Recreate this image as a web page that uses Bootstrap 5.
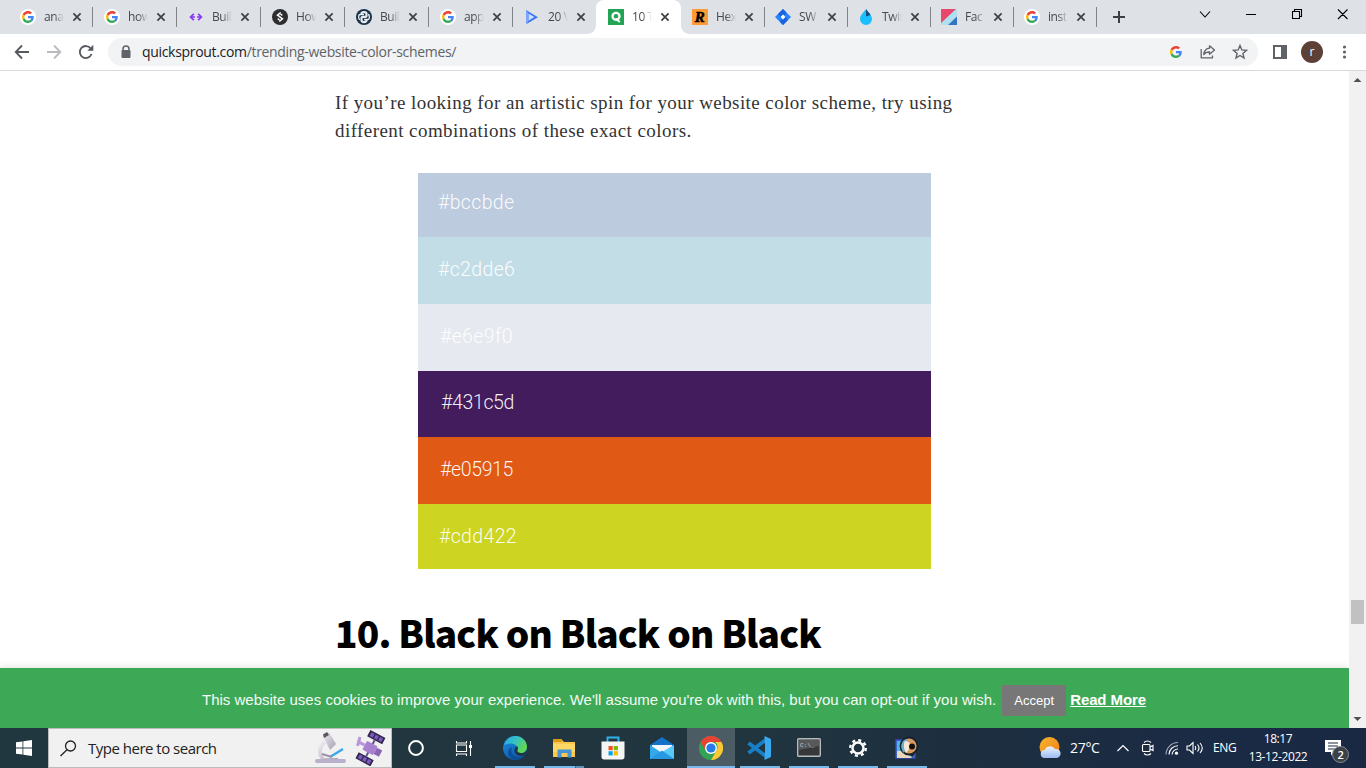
<!DOCTYPE html>
<html lang="en">
<head>
<meta charset="utf-8">
<meta name="viewport" content="width=device-width, initial-scale=1">
<title>Trending Website Color Schemes</title>
<link href="https://cdn.jsdelivr.net/npm/bootstrap@5.3.0/dist/css/bootstrap.min.css" rel="stylesheet">
<style>
body{width:1366px;height:768px;overflow:hidden;font-family:"Open Sans","Noto Sans",sans-serif;color:#000;line-height:1.2}
svg{display:block;flex:none}
.tabstrip{height:34px;background:#dee1e6;padding-left:8px;flex:none}
.tb{width:84px;height:34px;padding-left:12px;position:relative;flex:none;font-size:12px;color:#45484c}
.tb.slim{width:83px}
.tb:not(.current):not(.nosep)::after{content:"";position:absolute;right:-1px;top:7px;height:20px;width:1px;background:#808387}
.tb.slim:not(.current)::after{right:-2px!important}
.tb .ttl{width:20px;margin-left:8px;white-space:nowrap;letter-spacing:-.45px;-webkit-mask-image:linear-gradient(90deg,#000 50%,transparent);mask-image:linear-gradient(90deg,#000 50%,transparent)}
.tb .cls{margin-left:8px}
.tb.current{width:85px;background:#fff;border-radius:8px 8px 0 0}
.tb.current::before,.tb.current::after{content:"";position:absolute;bottom:0;width:8px;height:8px}
.tb.current::before{left:-8px;background:radial-gradient(circle at 0 0,transparent 7.5px,#fff 8px)}
.tb.current::after{right:-8px;background:radial-gradient(circle at 100% 0,transparent 7.5px,#fff 8px)}
.toolbar-row{height:37px;border-bottom:1px solid #d8d9dc;padding-left:14px;flex:none}
.omnibox{width:1150px;height:28px;border-radius:14px;background:#f1f3f4;margin-left:14px;padding:0 10px 0 12px;font-size:14px}
.addr{margin-left:10px;letter-spacing:-.32px;color:#202124}
.addr span{color:#5f6368}
.avatar{width:22px;height:22px;border-radius:50%;background:#5d4037;color:#fff;font-size:12px;margin-left:14px}
.viewport{height:657px;flex:none}
.doc{width:1349px;position:relative;overflow:hidden}
.article{width:660px;margin-left:335px;padding-top:18px}
.article p{font:19px/28px "Liberation Serif",serif;color:#333;margin:0;white-space:nowrap;letter-spacing:.43px}
.palette{width:513px;margin:28px 0 0 83px}
.sw{color:rgba(255,255,255,.95);font:300 19.5px/1 Roboto,sans-serif;letter-spacing:.35px;padding-left:20px}
.sw.digits{letter-spacing:-.35px}
.article h2{font:900 37px/48px "Noto Sans CJK SC",sans-serif;margin:39px 0 0;letter-spacing:-.8px;white-space:nowrap}
.cookie{position:absolute;left:0;right:0;bottom:0;height:60px;background:#3da956;color:#f4faf5;box-shadow:0 0 8px rgba(0,0,0,.15);font:15px/1 "Liberation Sans",sans-serif;padding:5px 0 0 202px;white-space:nowrap}
.cookie span,.cookie a{padding-bottom:2px}
.cookie .acc{width:64px;height:31px;background:#777;color:#fff;font-size:13px;border:0;border-radius:0;padding:0;margin:0 4px 0 6px}
.cookie a{color:#fff;font-weight:700;letter-spacing:-.1px}
.scrollbar-col{width:17px;background:#f1f1f1}
.thumb{width:13px;height:24px;background:#c1c1c1;margin-top:512px}
.taskbar{height:40px;background:linear-gradient(90deg,#20373f 0,#21353f 55%,#1d2f3f 70%,#1a2a45 90%,#192843);color:#fff;flex:none}
.start{width:48px;height:40px}
.searchbox{width:344px;height:40px;background:#f1f1f1;border:1px solid #b9bcbd;color:#222;padding-left:11px;font-size:15px}
.searchbox .lbl{margin-left:11px;width:227px;letter-spacing:-.5px;white-space:nowrap}
.tk{width:49px;height:40px;position:relative;flex:none;padding-right:2px}
.tk.open::after{content:"";position:absolute;left:4px;width:40px;bottom:0;height:2px;background:#76b9ed}
.tk.multi::after{background:linear-gradient(90deg,#76b9ed 31px,#3f6a8b 31px,#3f6a8b 32px,#5f92ba 32px)}
.tk.front{background:linear-gradient(90deg,#4c5c65 48px,transparent 48px)}
.tk.front::after{left:0;width:48px}
.tray{font-size:12px;flex:none;letter-spacing:-.3px}
.clock{width:62px;font-size:12px;line-height:18px;text-align:center;letter-spacing:-.4px;white-space:nowrap}
.count{position:absolute;left:7px;top:6px;width:17px;height:17px;border-radius:50%;background:#3b4146;border:1px solid #878c91;font-size:11px;font-weight:600}
</style>
</head>
<body class="d-flex flex-column bg-white">
<svg width="0" height="0" class="position-absolute">
  <defs>
    <linearGradient id="gEdge" x1="0" y1="0" x2="1" y2=".5"><stop offset="0" stop-color="#28a8e8"/><stop offset=".5" stop-color="#35c1c5"/><stop offset="1" stop-color="#62d84f"/></linearGradient>
    <linearGradient id="gBlue" x1="0" y1="0" x2=".6" y2="1"><stop offset="0" stop-color="#1a8fe0"/><stop offset="1" stop-color="#1059aa"/></linearGradient>
    <linearGradient id="gSun" x1="0" y1="0" x2="1" y2="1"><stop offset="0" stop-color="#f7b731"/><stop offset="1" stop-color="#ee7c12"/></linearGradient>
    <linearGradient id="gCloud" x1="0" y1="0" x2="0" y2="1"><stop offset="0" stop-color="#ecf3ff"/><stop offset="1" stop-color="#9dbcf0"/></linearGradient>
    <linearGradient id="gScope" x1="0" y1="0" x2="1" y2="1"><stop offset="0" stop-color="#efedf2"/><stop offset="1" stop-color="#a79daf"/></linearGradient>
    <symbol id="goog" viewBox="0 0 48 48">
      <path fill="#EA4335" d="M24 9.5c3.54 0 6.71 1.22 9.21 3.6l6.85-6.85C35.9 2.38 30.47 0 24 0 14.62 0 6.51 5.38 2.56 13.22l7.98 6.19C12.43 13.72 17.74 9.5 24 9.5z"/>
      <path fill="#4285F4" d="M46.98 24.55c0-1.57-.15-3.09-.38-4.55H24v9.02h12.94c-.58 2.96-2.26 5.48-4.78 7.18l7.73 6c4.51-4.18 7.09-10.36 7.09-17.65z"/>
      <path fill="#FBBC05" d="M10.53 28.59A14.5 14.5 0 0 1 9.77 24c0-1.6.28-3.14.76-4.59l-7.98-6.19A24 24 0 0 0 0 24c0 3.88.92 7.54 2.56 10.78l7.97-6.19z"/>
      <path fill="#34A853" d="M24 48c6.48 0 11.93-2.13 15.89-5.81l-7.73-6c-2.15 1.45-4.92 2.3-8.16 2.3-6.26 0-11.57-4.22-13.47-9.91l-7.98 6.19C6.51 42.62 14.62 48 24 48z"/>
    </symbol>
    <symbol id="gfav" viewBox="0 0 16 16"><circle cx="8" cy="8" r="8" fill="#fff"/><use href="#goog" x="2" y="2" width="12" height="12"/></symbol>
    <symbol id="x" viewBox="0 0 10 10"><path d="M1.400 1.400l7.200 7.200M8.600 1.400L1.400 8.600" stroke="#3c4043" stroke-width="1.700" fill="none"/></symbol>
  </defs>
</svg>

<header class="tabstrip d-flex">
  <div class="tb d-flex align-items-center"><svg width="16" height="16"><use href="#gfav"/></svg><span class="ttl">ana</span><svg class="cls" width="10" height="10"><use href="#x"/></svg></div>
  <div class="tb d-flex align-items-center"><svg width="16" height="16"><use href="#gfav"/></svg><span class="ttl">how</span><svg class="cls" width="10" height="10"><use href="#x"/></svg></div>
  <div class="tb d-flex align-items-center"><svg width="16" height="16" fill="none" stroke="#8838f5" stroke-width="1.700"><path d="M5.800 4.800L2.600 8l3.200 3.200M10.200 4.800L13.400 8l-3.200 3.200M3 8h4M9 8h4"/></svg><span class="ttl">Buil</span><svg class="cls" width="10" height="10"><use href="#x"/></svg></div>
  <div class="tb d-flex align-items-center"><svg width="16" height="16"><circle cx="8" cy="8" r="8" fill="#2d2d30"/><path d="M8.700 3.500L5.500 6.200 8.300 8.200M7.700 7.800l2.800 2L7.300 12.500M8.500 5l1.800 1.300M5.700 9.700L7.500 11" stroke="#fff" stroke-width="1.500" fill="none"/></svg><span class="ttl">How</span><svg class="cls" width="10" height="10"><use href="#x"/></svg></div>
  <div class="tb d-flex align-items-center"><svg width="16" height="16"><circle cx="8" cy="8" r="8" fill="#183247"/><path d="M5.500 5.500V4.800c0-2.300 5-2.300 5 0v1.700c0 1-.5 1.400-1.400 1.400H6.900c-1 0-1.400.5-1.400 1.400v2c0 2.300 5 2.300 5 0v-.8" stroke="#e5ebf0" stroke-width="2.200" fill="none"/><path d="M8 5.500H4c-1.800 0-1.800 5 0 5M8 10.500h4c1.800 0 1.800-5 0-5" stroke="#e5ebf0" stroke-width="1.300" fill="none"/></svg><span class="ttl">Buil</span><svg class="cls" width="10" height="10"><use href="#x"/></svg></div>
  <div class="tb d-flex align-items-center"><svg width="16" height="16"><use href="#gfav"/></svg><span class="ttl">app</span><svg class="cls" width="10" height="10"><use href="#x"/></svg></div>
  <div class="tb nosep d-flex align-items-center"><svg width="16" height="16"><path d="M2 1l12 7.200L2.500 15z" fill="#3d76f2"/><path d="M4.500 4.500v7.300L10.300 8z" fill="#cfdffb"/><path d="M2 1l2.500 3.500v7.300L2.500 15z" fill="#7ba9fa"/></svg><span class="ttl">20 \</span><svg class="cls" width="10" height="10"><use href="#x"/></svg></div>
  <div class="tb current d-flex align-items-center"><svg width="16" height="16"><path fill="#23a455" d="M0 0h16v16H0z"/><circle cx="8" cy="7.300" r="3.500" stroke="#fff" stroke-width="2.300" fill="none"/><path d="M7.500 9.500L11.800 13" stroke="#fff" stroke-width="2"/></svg><span class="ttl">10 T</span><svg class="cls" width="10" height="10"><use href="#x"/></svg></div>
  <div class="tb slim d-flex align-items-center" style="margin-left:-1px"><svg width="16" height="16"><path fill="#ff9b35" d="M0 0h16v16H0z"/><text x="2.800" y="13" font-family="Liberation Serif" font-size="15" font-weight="700" font-style="italic" stroke="#000" stroke-width=".5">R</text></svg><span class="ttl">Hex</span><svg class="cls" width="10" height="10"><use href="#x"/></svg></div>
  <div class="tb slim d-flex align-items-center"><svg width="16" height="16"><path d="M8 0l8 8-8 8-8-8z" fill="#2684ff"/><path d="M8 0l3 3c.5 2-1 3.500-3 2.700L5.500 8 3 5z" fill="#1b63dc"/><path d="M8 16l-3-3c0-2 1-3.300 3-2.700L10.500 8 13 11z" fill="#1b63dc"/><path d="M8 5.600L10.400 8 8 10.400 5.600 8z" fill="#fff"/></svg><span class="ttl">SW</span><svg class="cls" width="10" height="10"><use href="#x"/></svg></div>
  <div class="tb slim d-flex align-items-center"><svg width="16" height="16"><path d="M8 0c2 3 6 6 6 10a6 6 0 0 1-12 0C2 6 6 3 8 0z" fill="#19bfff"/><path d="M8 0c1.500 2.500 3 3.500 4.500 6L8 7.500z" fill="#174d7c"/></svg><span class="ttl">Twit</span><svg class="cls" width="10" height="10"><use href="#x"/></svg></div>
  <div class="tb slim d-flex align-items-center"><svg width="16" height="16"><path fill="#aee0ef" d="M0 0h16v16H0z"/><path fill="#e8486a" d="M0 0h15L0 14z"/><path fill="#3273c2" d="M16 7.500V16H7z"/></svg><span class="ttl">Fac</span><svg class="cls" width="10" height="10"><use href="#x"/></svg></div>
  <div class="tb slim d-flex align-items-center"><svg width="16" height="16"><use href="#gfav"/></svg><span class="ttl">inst</span><svg class="cls" width="10" height="10"><use href="#x"/></svg></div>
  <svg width="269" height="34" fill="none" stroke="#000"><path d="M18 17h12M24 11v12" stroke="#3c4043" stroke-width="2"/><path d="M105 11.500l5 5.500 5-5.500" stroke-width="1.100"/><path d="M151 14.500h10M197.500 11.500h7v7h-7zM199.500 11.500v-2h7v7h-2M243 9.500l9.500 9.500M252.500 9.500L243 19" stroke-width="1.100"/></svg>
</header>

<nav class="toolbar-row d-flex align-items-center">
  <svg width="80" height="18" fill="none" stroke="#55595d" stroke-width="1.800"><path d="M15 9H2M8 2.500L1.700 9 8 15.500"/><path d="M33 9h13M40 2.500L46.300 9 40 15.500" stroke="#b9bbbe"/><path d="M77.500 11a6 6 0 1 1-.8-5.500"/><path d="M79.300 1.800v6h-6z" fill="#55595d" stroke="none"/></svg>
  <div class="omnibox d-flex align-items-center">
    <svg width="12" height="14"><path d="M3 6V4a3 3 0 0 1 6 0v2" fill="none" stroke="#5f6368" stroke-width="1.500"/><rect x="1.500" y="5" width="9" height="8" rx="1" fill="#5f6368"/></svg>
    <div class="addr">quicksprout.com<span>/trending-website-color-schemes/</span></div>
    <svg class="ms-auto" width="12" height="12" style="margin-right:18px"><use href="#goog"/></svg>
    <svg width="16" height="16" fill="none" stroke="#606468" stroke-width="1.300" style="margin-right:16px"><path d="M1.200 5v8.800h11.300v-2.300M9.500 1.800L14.500 6 9.500 10.300V8C6.500 7.800 5 8.800 3.700 10.500 4.200 7 6 4.500 9.500 4.200z" stroke-linejoin="round"/></svg>
    <svg width="16" height="16" fill="none" stroke="#5f6368" stroke-width="1.400"><path d="M8 1.500l1.800 4.400 4.700.4-3.600 3.100 1.100 4.600L8 11.500 4 14l1.100-4.600L1.500 6.300l4.700-.4z"/></svg>
  </div>
  <svg width="14" height="14" style="margin-left:15px"><path d="M1 1h12v12H1z" fill="#fff" stroke="#5f6368" stroke-width="2"/><path fill="#5f6368" d="M8 0h6v14H8z"/></svg>
  <div class="avatar d-flex align-items-center justify-content-center">r</div>
  <svg width="6" height="16" style="margin-left:18px" fill="#5f6368"><circle cx="3.500" cy="3" r="1.600"/><circle cx="3.500" cy="8" r="1.600"/><circle cx="3.500" cy="13" r="1.600"/></svg>
</nav>

<div class="viewport d-flex">
  <main class="doc">
    <article class="article">
      <p>If you’re looking for an artistic spin for your website color scheme, try using<br>different combinations of these exact colors.</p>
      <div class="palette">
        <div class="sw d-flex align-items-center" style="height:64px;background:#bccbde;padding-bottom:5px">#bccbde</div>
        <div class="sw d-flex align-items-center" style="height:67px;background:#c2dde6;padding-bottom:2px">#c2dde6</div>
        <div class="sw d-flex align-items-center" style="height:67px;background:#e6e9f0;padding-bottom:2px;padding-left:22px">#e6e9f0</div>
        <div class="sw digits d-flex align-items-center" style="height:66px;background:#431c5d;padding-bottom:3px;padding-left:23px">#431c5d</div>
        <div class="sw digits d-flex align-items-center" style="height:67px;background:#e05915;padding-bottom:2px;padding-left:22px">#e05915</div>
        <div class="sw d-flex align-items-center" style="height:65px;background:#cdd422;padding-left:21px">#cdd422</div>
      </div>
      <h2>10. Black on Black on Black</h2>
    </article>
    <div class="cookie d-flex align-items-center"><span>This website uses cookies to improve your experience. We'll assume you're ok with this, but you can opt-out if you wish.</span><button class="acc btn">Accept</button><a href="#">Read More</a></div>
  </main>
  <aside class="scrollbar-col d-flex flex-column align-items-center">
    <svg width="17" height="17"><path d="M4.500 11L8.500 7l4 4z" fill="#505050"/></svg>
    <div class="thumb"></div>
    <svg class="mt-auto" width="17" height="17"><path d="M4.500 6L8.500 10l4-4z" fill="#505050"/></svg>
  </aside>
</div>

<footer class="taskbar d-flex align-items-center">
  <div class="start d-flex align-items-center justify-content-center"><svg width="16" height="16" fill="#fff"><path d="M0 2.300L6.500 1.400v6.100H0zM7.300 1.300L16 0v7.500H7.300zM0 8.400h6.500v6.200L0 13.700zM7.300 8.400H16V16l-8.700-1.300z"/></svg></div>
  <div class="searchbox d-flex align-items-center">
    <svg width="17" height="17" fill="none" stroke="#222" stroke-width="1.300"><circle cx="10.500" cy="6" r="5"/><path d="M7 9.700L.5 16"/></svg>
    <div class="lbl">Type here to search</div>
    <svg width="32" height="34"><path d="M10 11c-6 3-7 13-1 18h14" fill="none" stroke="url(#gScope)" stroke-width="4"/><path d="M8 5l6-4 7 12-6 6z" fill="url(#gScope)"/><path d="M8 3.500L12 1l2 3-5 3z" fill="#5c545f"/><path d="M15 26L28 18" stroke="#39a8ec" stroke-width="2.500"/><path d="M7 23l10 3" stroke="#9c92aa" stroke-width="2"/><rect y="28" width="31" height="4" rx="2" fill="#b9b0cb"/></svg>
    <svg width="32" height="36" viewBox="0 0 32 36" style="margin-left:7px"><g transform="rotate(28 16 18)"><path d="M8 2h17v7H8zM8 27h17v7H8z" fill="#34284b"/><path d="M10 3.500h3.500v4H10zM14.800 3.500h3.500v4h-3.500zM19.600 3.500h3.500v4h-3.500zM10 28.500h3.500v4H10zM14.800 28.500h3.500v4h-3.500zM19.600 28.500h3.500v4h-3.500z" fill="#7b5bc8"/><path d="M16.500 9v18" stroke="#65558a" stroke-width="2"/><rect x="10" y="13" width="12" height="10" rx="1" fill="#a97fd0"/><path d="M22 14.500h6v7h-6z" fill="#8b64b5"/><path d="M10 18H4M2 13l2 9" stroke="#b896dc" stroke-width="3"/></g></svg>
  </div>
  <div class="tk d-flex align-items-center justify-content-center"><svg width="18" height="18"><circle cx="9" cy="9" r="6.900" fill="none" stroke="#fff" stroke-width="2"/></svg></div>
  <div class="tk d-flex align-items-center justify-content-center" style="width:50px;padding-right:4px"><svg width="18" height="17" fill="none" stroke="#fff" stroke-width="1.100"><path d="M1.500 5h10v6.500h-10zM1.500 1v2h10V1M1.500 16v-2h10v2M15.500 1v15"/><path d="M14 5h3v3h-3z" fill="#fff" stroke="none"/></svg></div>
  <div class="tk open d-flex align-items-center justify-content-center"><svg width="24" height="24"><circle cx="12" cy="12" r="12" fill="url(#gBlue)"/><path d="M1 9.500C3 3 7.500 0 12.500 0 20 0 24 6 24 11c0 4-3.500 6.500-7 6-3-.5-3-2-2.200-3.500C15.500 9 8 5 1 9.500z" fill="url(#gEdge)"/><path d="M9 11c-3 7 4 13 12.500 8.500-2 2.500-5.500 4.500-9 4.500C4 23 3 13 9 11z" fill="#0c4f98"/><path d="M14.500 10.500c1.500 2-2.500 5 2 6.300 3 .8 5 .5 7-2.300-.5 3-1.200 4-2.500 5-5 1.500-10-1-9.500-5.500 0-2 1-3.500 3-3.500z" fill="#203640"/></svg></div>
  <div class="tk open multi d-flex align-items-center justify-content-center"><svg width="22" height="19"><path d="M0 1h9l2 2h11v15H0z" fill="#fcc74a"/><path d="M0 0h9v3H0z" fill="#dc9a12"/><path d="M0 5h22v8H0z" fill="#ffd765"/><path d="M4.500 18.500v-8h14v8h-4V14h-6v4.500z" fill="#4694d6"/></svg></div>
  <div class="tk d-flex align-items-center justify-content-center"><svg width="24" height="24"><path d="M6.500 6V1.500h11V6" fill="none" stroke="#2cb5ea" stroke-width="1.900"/><path d="M.5 5.500h23V21c0 1.500-1 2.500-2.500 2.500H3C1.500 23.500.5 22.500.5 21z" fill="#f5f5f5"/><path fill="#f25022" d="M7.500 10h4.200v4.200H7.500z"/><path fill="#7fba00" d="M12.700 10h4.200v4.200h-4.200z"/><path fill="#00a4ef" d="M7.500 15.200h4.200v4.200H7.500z"/><path fill="#ffb900" d="M12.700 15.200h4.200v4.200h-4.200z"/></svg></div>
  <div class="tk d-flex align-items-center justify-content-center"><svg width="24" height="23"><path d="M0 8L12 0l12 8v14H0z" fill="#1371c8"/><path d="M2 8h20v9H2z" fill="#f3f7fa"/><path d="M0 8l12 8 12-8v14H0z" fill="#32a9eb"/><path d="M12 15L24 8v14z" fill="#57caf8"/><path d="M0 22l12-8.500L24 22z" fill="#2798e3"/></svg></div>
  <div class="tk open front d-flex align-items-center justify-content-center"><svg width="24" height="24"><circle cx="12" cy="12" r="12" fill="#30a452"/><path d="M1.600 6A12 12 0 0 1 22.400 6H12a6 6 0 0 0-5.200 9z" fill="#ea4335"/><path d="M22.400 6A12 12 0 0 1 12 24l5.200-9A6 6 0 0 0 16 6z" fill="#fbc934"/><circle cx="12" cy="12" r="6" fill="#fff"/><circle cx="12" cy="12" r="4.600" fill="#277be8"/></svg></div>
  <div class="tk open d-flex align-items-center justify-content-center" style="padding-right:4px"><svg width="24" height="24"><path d="M18 4.500L1.500 17M1.500 7L18 19.500" stroke="#177fc7" stroke-width="4"/><path d="M17.500 0L24 3v18l-6.500 3z" fill="#39a9f0"/><path d="M18 7v10l-6.500-5z" fill="#20353f"/></svg></div>
  <div class="tk open d-flex align-items-center justify-content-center"><svg width="24" height="20"><rect x=".7" y=".7" width="22.600" height="17.600" rx="1" fill="#37383b" stroke="#b7babb" stroke-width="1.400"/><path d="M2 2h20v6L2 12z" fill="#57585a"/><text x="3" y="9" fill="#ccc" font-size="6" font-family="Liberation Mono">C:\_</text></svg></div>
  <div class="tk open d-flex align-items-center justify-content-center"><svg width="20" height="20" fill="none" stroke="#fff"><circle cx="10" cy="10" r="5.500" stroke-width="2.500"/><circle cx="10" cy="10" r="7.800" stroke-width="2.400" stroke-dasharray="3.060 3.060"/></svg></div>
  <div class="tk open d-flex align-items-center justify-content-center"><svg width="24" height="24"><path d="M1 4h19v18H1z" fill="#49b8e6" stroke="#3a46c0" stroke-width="1.500"/><path d="M2 15l7 0 8 7H2z" fill="#ead9b8"/><circle cx="14" cy="10" r="8.500" fill="#d99a5d" stroke="#17202c" stroke-width="1.800"/><path d="M9 4c-4 4-3 10 0 13 1-4 5-8 4-14z" fill="#6aaed0"/><path d="M10 5c4 0 6 3 5 6s-3 5-4 6c-2-3-3-9-1-12z" fill="#f8e8d2"/><circle cx="17" cy="10.500" r="3" fill="#111"/><path d="M9 16c3 4 10 4 12-1l-3 6z" fill="#222"/></svg></div>
  <div class="tray d-flex align-items-center ms-auto">
    <svg width="24" height="24"><circle cx="10.500" cy="11" r="10" fill="url(#gSun)"/><path d="M6 22a4 4 0 0 1-.5-8 6 6 0 0 1 10.500-1 4.500 4.500 0 0 1 2 9z" fill="url(#gCloud)"/></svg>
    <span style="font-size:14px;width:29px;margin:0 18px 0 7px">27°C</span>
    <svg width="12" height="8" fill="none" stroke="#fff" stroke-width="1.200"><path d="M.5 7L6 1.500 11.500 7"/></svg>
    <svg width="14" height="16" fill="none" stroke="#fff" stroke-width="1.100" style="margin-left:12px"><rect x="1.500" y="4.500" width="7.500" height="7" rx="1"/><path d="M9 7l3-1.500v5L9 9M3 2.500C5 .5 8 .5 10 2.500M3 13.500c2 2 5 2 7 0"/></svg>
    <svg width="14" height="15" fill="none" stroke="#fff" stroke-width="1.100" style="margin-left:10px"><path d="M1 13.500A12 12 0 0 1 13 1.500" opacity=".6"/><path d="M4 13.500A9 9 0 0 1 13 4.700M7 13.500A6 6 0 0 1 13 8"/><circle cx="11.500" cy="12.200" r="1.600" fill="#fff" stroke="none"/></svg>
    <svg width="18" height="14" fill="none" stroke="#fff" stroke-width="1.100" style="margin-left:7px"><path d="M1 5h2.500L7 1.500v11L3.500 9H1zM9 5q1.500 2 0 4M11.500 3.500q3 3.500 0 7M14 2q4.500 5 0 10"/></svg>
    <span style="width:24px;margin:0 10px 0 9px">ENG</span>
    <div class="clock">18:17<br>13-12-2022</div>
    <div class="position-relative" style="margin-left:16px;width:41px;height:16px"><svg width="17" height="16"><path d="M0 0h16v12H9l-3 3.500V12H0z" fill="#fff"/><path d="M3 3h10M3 6h10M3 9h7" stroke="#1b2a42"/></svg><div class="count d-flex align-items-center justify-content-center">2</div></div>
  </div>
</footer>
<script src="https://cdn.jsdelivr.net/npm/bootstrap@5.3.0/dist/js/bootstrap.bundle.min.js"></script>
</body>
</html>
